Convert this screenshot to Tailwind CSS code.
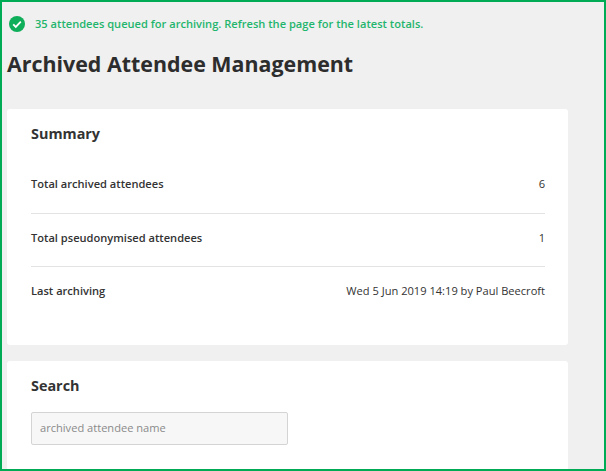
<!DOCTYPE html>
<html lang="en">

<head>
  <meta charset="UTF-8">
  <title>Archived Attendee Management</title>
  <script src="https://cdn.jsdelivr.net/npm/@tailwindcss/browser@4"></script>
</head>

<body class="m-0 overflow-hidden">
  <div class="h-[471px] w-[606px] overflow-hidden border-2 border-[#00ab55] bg-[#f0f0f0] font-['Open_Sans',sans-serif] text-[#333]">
    <div class="w-[566px] pl-[5px]">
      <!-- Success message -->
      <div class="flex h-[30px] items-center gap-[10px] pt-[14px] pl-[2px] text-[11.1px] font-semibold text-[#1fb56d]">
        <svg class="h-4 w-4 shrink-0" viewBox="0 0 16 16">
          <circle cx="8" cy="8" r="8" fill="#0fae5a" />
          <path d="M4.2 8.3l2.6 2.6 5-5.2" fill="none" stroke="#fff" stroke-width="1.8" />
        </svg>
        <span>35 attendees queued for archiving. Refresh the page for the latest totals.</span>
      </div>

      <h1 class="mt-[15px] h-[34px] text-[21.4px] leading-[34px] font-bold text-[#2d2d2d]">Archived Attendee Management</h1>

      <!-- Summary -->
      <section class="mt-[28px] h-[236px] rounded-[3px] bg-white pr-[23px] pl-6 pt-[13px]">
        <h2 class="text-[14.4px] leading-[24px] font-bold">Summary</h2>
        <dl class="mt-[14px] text-[11.1px]">
          <div class="flex h-[54px] items-start justify-between border-b border-[#e3e3e3] pt-[16px]">
            <dt class="font-semibold">Total archived attendees</dt>
            <dd>6</dd>
          </div>
          <div class="flex h-[53px] items-start justify-between border-b border-[#e3e3e3] pt-[16px]">
            <dt class="font-semibold">Total pseudonymised attendees</dt>
            <dd>1</dd>
          </div>
          <div class="flex h-[54px] items-start justify-between pt-[16px]">
            <dt class="font-semibold">Last archiving</dt>
            <dd>Wed 5 Jun 2019 14:19 by Paul Beecroft</dd>
          </div>
        </dl>
      </section>

      <!-- Search -->
      <section class="mt-4 h-[120px] rounded-[3px] bg-white px-6 pt-[13px]">
        <h2 class="text-[14.4px] leading-[24px] font-bold">Search</h2>
        <input type="text" placeholder="archived attendee name"
          class="mt-[14px] block h-[33px] w-[257px] rounded-[2px] border border-[#d4d4d4] bg-[#f7f7f7] px-2 pb-[2px] text-[11.1px] placeholder:text-[#8a8a8a]">
      </section>
    </div>
  </div>
</body>

</html>
